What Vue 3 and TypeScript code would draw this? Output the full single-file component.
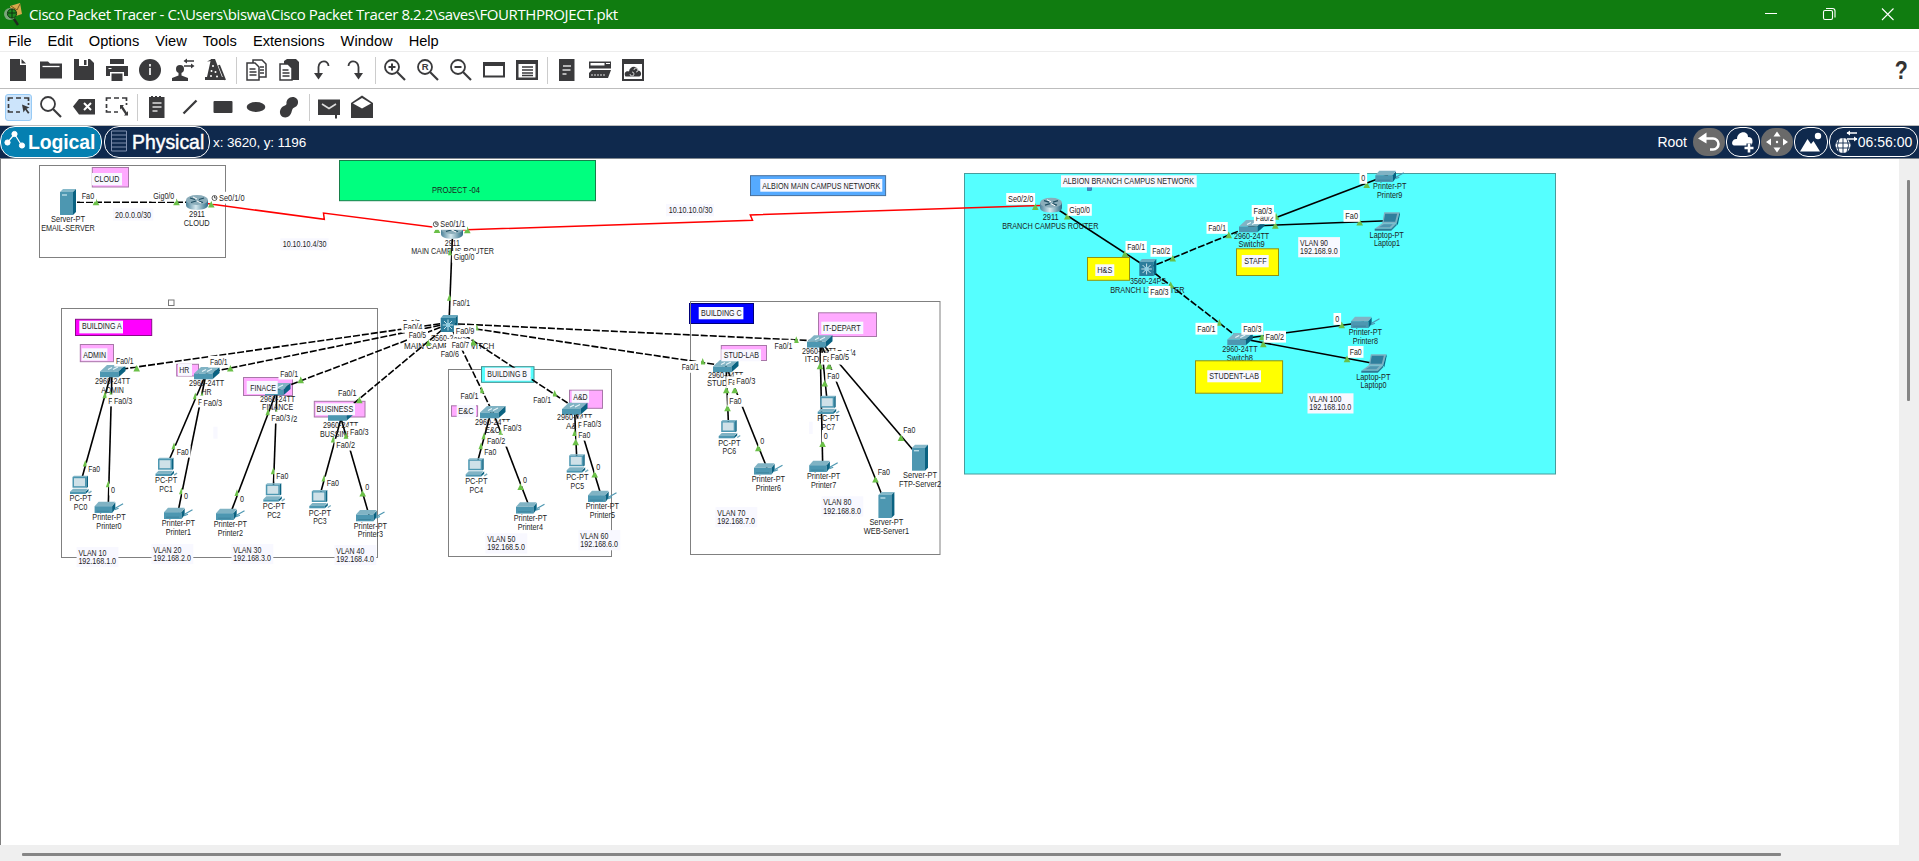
<script setup lang="ts">
type Point = [number, number]
type DeviceKind = 'server' | 'router' | 'l3' | 'switch' | 'pc' | 'printer' | 'laptop'

interface Device { kind: DeviceKind; x: number; y: number; lines: [string, number, number, number][] }
interface Area { x: number; y: number; w: number; h: number; fill: string; stroke: string }
interface Note { x: number; y: number; w: number; h: number; tx: number; lines: [string, number, number][]; bg?: string }
interface Port { text: string; x: number; y: number; w: number; left?: number; right?: number; clock?: boolean }

const menus = ['File', 'Edit', 'Options', 'View', 'Tools', 'Extensions', 'Window', 'Help']

const fileTools: string[][] = [
  ['new', 'open', 'save', 'print', 'info', 'user', 'wizard'],
  ['copy', 'paste', 'undo', 'redo'],
  ['zoomin', 'zoomreset', 'zoomout', 'window', 'list'],
  ['palette', 'devices', 'cloudwin'],
]
const drawTools: string[][] = [
  ['select', 'search', 'delete', 'resize'],
  ['note', 'line', 'rect', 'ellipse', 'blob'],
  ['mail', 'mailopen'],
]

const area = (x: number, y: number, x2: number, y2: number, fill: string, stroke = '#808080'): Area =>
  ({ x, y, w: x2 - x, h: y2 - y, fill, stroke })

const pink = '#ffaaff'
const pinkEdge = '#a877a8'
const areas: Area[] = [
  area(39.5, 165.5, 225.5, 257.5, 'none'),
  area(61.5, 308.5, 377.5, 557.5, 'none'),
  area(448.5, 369.5, 611.5, 556.5, 'none'),
  area(689.5, 303.5, 753.5, 323.5, '#0000ff', '#00007a'),
  area(690.5, 301.5, 940, 554.5, 'none'),
  area(964.5, 173.5, 1555.5, 474, '#55ffff', '#489c9c'),
  area(339.5, 160.5, 595.5, 200.7, '#00ff7f', '#177f4a'),
  area(92.3, 167.5, 128.5, 187, pink, pinkEdge),
  area(75.5, 319.3, 151.7, 335.5, '#ff00ff', '#8a0a8a'),
  area(80.3, 344.5, 113.5, 361.7, pink, pinkEdge),
  area(176.7, 364.3, 198.5, 376, pink, pinkEdge),
  area(243.5, 377.5, 292.5, 395.5, pink, pinkEdge),
  area(314.3, 401.3, 365, 417, pink, pinkEdge),
  area(481.5, 366.7, 534, 382.3, '#55ffff', '#3d8f8f'),
  area(451.5, 405.8, 477.6, 416.3, pink, pinkEdge),
  area(569.5, 390.2, 602.5, 408.3, pink, pinkEdge),
  area(750.5, 175.7, 885.6, 195.6, '#55aaff', '#456f9d'),
  area(818.5, 312.8, 876.5, 336.5, pink, pinkEdge),
  area(721.3, 345.5, 766.5, 360.5, pink, pinkEdge),
]
const yellowAreas: Area[] = [
  area(1087.5, 257.5, 1129.5, 280.3, '#ffff00', '#8f9412'),
  area(1236.5, 248.8, 1278.5, 275.5, '#ffff00', '#8f9412'),
  area(1195.5, 360.8, 1282.6, 393.2, '#ffff00', '#8f9412'),
]

const vlan = (n: number, subnet: string, x: number, y: number, y2: number): Note => ({
  x: x - 1.8, y: y - 8.7, w: n === 100 ? 46 : 41.8, h: 20.2, tx: x,
  lines: [[`VLAN ${n}`, y, n === 100 ? 32 : 28], [subnet, y2, n === 100 ? 42 : 37.7]],
})

const notes: Note[] = [
  { x: 92, y: 173, w: 30, h: 12.3, tx: 94.3, lines: [['CLOUD', 181.8, 25]] },
  { x: 113, y: 208.3, w: 40.3, h: 12.3, tx: 115, lines: [['20.0.0.0/30', 217.8, 36]] },
  { x: 280.3, y: 238.3, w: 48.3, h: 12, tx: 282.7, lines: [['10.10.10.4/30', 247, 43.7]] },
  { x: 431, y: 184, w: 0, h: 0, tx: 432, lines: [['PROJECT -04', 192.6, 48]] },
  { x: 79.3, y: 320.7, w: 43.7, h: 12.7, tx: 82, lines: [['BUILDING A', 329, 39.7]] },
  { x: 81.7, y: 348.3, w: 25.7, h: 12.3, tx: 83.3, lines: [['ADMIN', 357.7, 22.7]] },
  { x: 178, y: 363.7, w: 14, h: 12.2, tx: 179.3, lines: [['HR', 372.7, 10]] },
  { x: 246.7, y: 381, w: 31, h: 13, tx: 250.3, lines: [['FINACE', 390.7, 25.7]] },
  { x: 315.7, y: 403.3, w: 39.3, h: 11.9, tx: 316.6, lines: [['BUSINESS', 412, 36.7]] },
  { x: 485, y: 367.7, w: 45.7, h: 13, tx: 487.3, lines: [['BUILDING B', 376.8, 39.7]] },
  { x: 456.7, y: 405, w: 19.3, h: 12.3, tx: 458.3, lines: [['E&C', 414, 15.3]] },
  { x: 571.7, y: 390.7, w: 17.3, h: 12, tx: 573.3, lines: [['A&D', 400, 14.3]] },
  { x: 760.3, y: 179, w: 122, h: 12.7, tx: 762.3, lines: [['ALBION MAIN CAMPUS NETWORK', 189, 118]] },
  { x: 666, y: 204, w: 48, h: 12.3, tx: 668.7, lines: [['10.10.10.0/30', 212.8, 43.7]] },
  { x: 698.7, y: 307, w: 44.7, h: 12.3, tx: 701, lines: [['BUILDING C', 316, 40.7]] },
  { x: 821.3, y: 321.7, w: 42, h: 12.3, tx: 823, lines: [['IT-DEPART', 331, 37.7]] },
  { x: 721.3, y: 349.3, w: 39.7, h: 12, tx: 723.7, lines: [['STUD-LAB', 358, 35.3]] },
  { x: 1061, y: 175.3, w: 135.7, h: 12, tx: 1063, lines: [['ALBION BRANCH CAMPUS NETWORK', 184, 131]] },
  { x: 1095.3, y: 264.3, w: 19, h: 11.7, tx: 1097.3, lines: [['H&S', 272.8, 15]] },
  { x: 1241.7, y: 255, w: 27, h: 12.3, tx: 1244.3, lines: [['STAFF', 264, 22.3]] },
  { x: 1207.3, y: 370.3, w: 53.7, h: 12, tx: 1209.3, lines: [['STUDENT-LAB', 378.8, 49.7]] },
  { x: 213.3, y: 426.7, w: 4.3, h: 12, tx: 0, lines: [] },
  { x: 809, y: 421.7, w: 3.7, h: 12.3, tx: 0, lines: [] },
  vlan(10, '192.168.1.0', 78.4, 555.7, 564),
  vlan(20, '192.168.2.0', 153.3, 552.7, 561),
  vlan(30, '192.168.3.0', 233.3, 552.7, 560.6),
  vlan(40, '192.168.4.0', 336.3, 553.7, 562),
  vlan(50, '192.168.5.0', 487.3, 542, 550),
  vlan(60, '192.168.6.0', 580.3, 538.8, 547),
  vlan(70, '192.168.7.0', 717.3, 515.8, 523.8),
  vlan(80, '192.168.8.0', 823.3, 505, 513.8),
  vlan(90, '192.168.9.0', 1300, 245.8, 254),
  vlan(100, '192.168.10.0', 1309.3, 402, 410),
]

// Icon top-left corner, then label lines: text, centre x, baseline, width.
const pc = (name: string, x: number, y: number, dx = 10.6): Device => ({
  kind: 'pc', x, y, lines: [['PC-PT', x + dx, y + 25.5, 22.3], [name, x + dx, y + 34.4, 13.5]],
})
const printer = (name: string, x: number, y: number): Device => ({
  kind: 'printer', x, y, lines: [['Printer-PT', x + 14.4, y + 18.5, 33.3], [name, x + 14.4, y + 27.3, 25.3]],
})
const laptop = (name: string, x: number, y: number): Device => ({
  kind: 'laptop', x, y, lines: [['Laptop-PT', x + 12, y + 25.3, 34.3], [name, x + 12.3, y + 33.6, 26]],
})
const server = (name: string, x: number, y: number, w: number): Device => ({
  kind: 'server', x, y, lines: [['Server-PT', x + 8, y + 33.2, 34], [name, x + 8, y + 42, w]],
})
const sw = (name: string, x: number, y: number, w: number, b1: number, b2: number): Device => ({
  kind: 'switch', x, y, lines: [['2960-24TT', x + 12.6, b1, 35.3], [name, x + 12.6, b2, w]],
})

const devices: Device[] = [
  server('EMAIL-SERVER', 60, 189, 53.7),
  { kind: 'router', x: 186, y: 195, lines: [['2911', 197, 217, 16], ['CLOUD', 196.7, 226, 26]] },
  { kind: 'router', x: 441, y: 224, lines: [['2911', 452.3, 246.3, 15], ['MAIN CAMPUS ROUTER', 452.5, 254, 82.7]] },
  { kind: 'l3', x: 440.7, y: 315, lines: [['3560-24PS', 449, 340.7, 36], ['MAIN CAMPUS SWITCH', 449.2, 348.8, 90.3]] },
  sw('ADMIN', 100, 365, 22.7, 384, 392.8),
  sw('HR', 194, 367, 10, 385.8, 394.8),
  sw('FINANCE', 265, 383, 31, 401.8, 409.8),
  sw('BUSSINESS', 328, 408.5, 41, 427.8, 436.8),
  sw('E&C', 480, 406, 15.3, 424.6, 432.6),
  sw('A&D', 562, 402.5, 17, 419.6, 428.5),
  sw('STUD-LAB', 713, 360, 37.4, 378, 386),
  sw('IT-DEPT', 807, 335.3, 29.5, 354, 361.8),
  pc('PC0', 70, 475.7),
  pc('PC1', 155.5, 457.7),
  pc('PC2', 263.3, 483.3),
  pc('PC3', 309.3, 490),
  pc('PC4', 465.7, 458.3),
  pc('PC5', 566.7, 454.3),
  pc('PC6', 718.7, 420),
  pc('PC7', 817.7, 395.7),
  printer('Printer0', 94.6, 501.7),
  printer('Printer1', 164, 507.7),
  printer('Printer2', 216, 508.7),
  printer('Printer3', 356, 510),
  printer('Printer4', 516, 502.3),
  printer('Printer5', 588, 490.7),
  printer('Printer6', 754, 463.3),
  printer('Printer7', 809.2, 460.7),
  server('FTP-Server2', 912, 444.7, 42),
  server('WEB-Server1', 878.4, 492, 45.3),
  { kind: 'router', x: 1040, y: 197.7, lines: [['2911', 1050.7, 219.8, 16], ['BRANCH CAMPUS ROUTER', 1050.3, 229, 96.3]] },
  { kind: 'l3', x: 1139.3, y: 259, lines: [['3560-24PS', 1148, 284, 36], ['BRANCH L3 ROUTER', 1147.3, 293, 74.3]] },
  sw('Switch9', 1239, 220, 26.3, 238.8, 247),
  sw('Switch8', 1227.3, 333, 26.3, 352, 360.8),
  printer('Printer9', 1375.3, 170.7),
  printer('Printer8', 1351, 316.7),
  laptop('Laptop1', 1374.7, 212.3),
  laptop('Laptop0', 1361.3, 354.3),
]

const solid: [Point, Point][] = [
  [[452.5, 235], [449, 323]],
  [[111.5, 372], [80, 485]], [[112, 372], [108.3, 505]],
  [[206, 374], [167, 465]], [[206, 374], [178, 512]],
  [[277, 390], [231, 512]], [[277, 390], [273.3, 490]],
  [[342, 415], [320, 495]], [[340, 415], [369, 515]],
  [[491, 412], [478, 460]], [[493, 412], [529, 506]],
  [[574.5, 408], [576.8, 460]], [[574.5, 408], [601, 495]],
  [[726, 366], [728.5, 425]], [[726, 366], [767, 468]],
  [[820, 341], [822.7, 465]], [[821, 341], [827, 400]], [[820, 341], [886, 505]], [[820, 341], [919, 457]],
  [[1051, 205], [1148, 268]],
  [[1251, 227], [1388, 175]], [[1251, 226], [1388, 220.8]],
  [[1240, 339], [1364, 322.3]], [[1240, 338.3], [1373, 363.3]],
]
const dashed: [Point, Point][] = [
  [[68, 202.3], [196, 202.3]],
  [[449, 322.5], [112, 370.5]], [[449, 323.5], [206, 373]], [[449, 324], [277, 390]], [[449, 324], [340, 415]],
  [[449, 323], [492.5, 412]], [[449, 325], [574.5, 407.5]], [[449, 325], [726, 366]], [[449, 323.5], [819.5, 341]],
  [[1148, 268], [1251, 226]], [[1148, 268], [1240, 339]],
]
const serial: string[] = [
  '205,203.3 324.3,219.3 323.5,213 452,229.5',
  '452,230.3 752.5,220.3 750.3,215 1050,205.2',
]

const beacons: [number, number, number?][] = [
  [96, 202], [176.5, 202], [211.3, 204.3], [437, 229.8], [467.3, 230], [450, 252, 4], [449.5, 297.5, 5],
  [476.7, 327.2, 4], [428.3, 342.7, 5], [473.3, 342.2],
  [136.7, 368.3], [230.3, 368.3], [300.7, 380], [359.3, 400],
  [105, 395, 5], [110.7, 394, 4], [85.3, 463.3, 5], [108.3, 484, 5],
  [195.3, 396, 5], [202, 395, 4], [174, 446, 5], [181.5, 491, 5],
  [268, 412, 5], [276.5, 412, 4], [237, 492.7, 5], [273.3, 471, 5],
  [333.3, 439.3, 5], [346, 436, 5], [324, 478.3, 5], [362.7, 493.3],
  [481.7, 390, 5], [554.7, 393.3, 5], [484, 436, 5], [481, 446, 5], [500.7, 432.5, 5], [520.7, 486.7],
  [574.7, 432.7, 5], [575.7, 442], [594.7, 474.3],
  [702.7, 361.3, 5], [796.3, 339.7, 5], [726.3, 390], [727.5, 408], [734.7, 390], [758.3, 448],
  [820, 366], [829, 366], [824.7, 383.3], [822.6, 443.7], [901, 437.7], [875.5, 479.3],
  [1035.3, 206.7], [1067.3, 216.3], [1125, 253.7], [1172.7, 258.3], [1170.7, 285], [1228.7, 235],
  [1275.3, 225.5], [1276, 216.5], [1366.7, 184.7], [1359.7, 222.3], [1219.3, 322.5, 5], [1262, 337],
  [1263.3, 344], [1341.7, 325], [1347, 359],
]

const ports: Port[] = [
  { text: 'Fa0', x: 81.7, y: 198.8, w: 12.5 },
  { text: 'Gig0/0', x: 153.3, y: 198.8, w: 21 },
  { text: 'Se0/1/0', x: 219, y: 200.8, w: 25.5, left: 7, clock: true },
  { text: 'Se0/1/1', x: 440.3, y: 227, w: 25, left: 8, clock: true },
  { text: 'Gig0/0', x: 453.7, y: 260, w: 20.7 },
  { text: 'Fa0/1', x: 452.7, y: 306, w: 17.3 },
  { text: 'Fa0/3', x: 402.7, y: 326, w: 17.5 },
  { text: 'Fa0/4', x: 403.3, y: 330, w: 19 },
  { text: 'Fa0/5', x: 408.7, y: 338, w: 17.5 },
  { text: 'Fa0/9', x: 455.7, y: 334.3, w: 18.7 },
  { text: 'Fa0/6', x: 440.7, y: 357, w: 18.3 },
  { text: 'Fa0/7', x: 451.7, y: 347.8, w: 17.5, left: 5.5 },
  { text: 'Fa0/1', x: 116, y: 363.8, w: 17.7 },
  { text: 'Fa0/2', x: 108.3, y: 403.6, w: 18 },
  { text: 'Fa0/3', x: 114, y: 404.3, w: 18.3 },
  { text: 'Fa0', x: 88.3, y: 471.8, w: 11.7 },
  { text: '0', x: 111, y: 492.7, w: 4 },
  { text: 'Fa0/1', x: 210, y: 364.8, w: 17.7 },
  { text: 'Fa0/2', x: 198, y: 404.6, w: 18 },
  { text: 'Fa0/3', x: 203.5, y: 405.5, w: 18.7 },
  { text: 'Fa0', x: 176.7, y: 454.8, w: 12 },
  { text: '0', x: 184, y: 498.6, w: 4 },
  { text: 'Fa0/1', x: 280.3, y: 376.7, w: 17.7 },
  { text: 'Fa0/2', x: 278.7, y: 421.6, w: 18.7 },
  { text: 'Fa0/3', x: 271.3, y: 420.7, w: 18.7, right: 1 },
  { text: 'Fa0', x: 276.3, y: 478.8, w: 12 },
  { text: '0', x: 240, y: 501.8, w: 4 },
  { text: 'Fa0/1', x: 338, y: 395.8, w: 18.7 },
  { text: 'Fa0/3', x: 350, y: 434.8, w: 18.7 },
  { text: 'Fa0/2', x: 336.3, y: 447.8, w: 18.7 },
  { text: 'Fa0', x: 326.7, y: 485.7, w: 12.3 },
  { text: '0', x: 365.3, y: 489.8, w: 4 },
  { text: 'Fa0/1', x: 460.5, y: 399, w: 18 },
  { text: 'Fa0/3', x: 503.3, y: 430.8, w: 18.3 },
  { text: 'Fa0/2', x: 487, y: 443.8, w: 18.3 },
  { text: 'Fa0', x: 484.3, y: 455, w: 12 },
  { text: '0', x: 523, y: 483, w: 4 },
  { text: 'Fa0/1', x: 533.3, y: 403, w: 17.7 },
  { text: 'Fa0/2', x: 578, y: 427.6, w: 18 },
  { text: 'Fa0/3', x: 583.3, y: 426.8, w: 18 },
  { text: 'Fa0', x: 578.3, y: 437.8, w: 12 },
  { text: '0', x: 596.3, y: 469.8, w: 4 },
  { text: 'Fa0/1', x: 681.7, y: 370, w: 17.5 },
  { text: 'Fa0/2', x: 728, y: 385.3, w: 18 },
  { text: 'Fa0/3', x: 736.3, y: 383.8, w: 19 },
  { text: 'Fa0', x: 729.3, y: 404, w: 12.3 },
  { text: '0', x: 760.3, y: 444, w: 4 },
  { text: 'Fa0/1', x: 774.5, y: 348.8, w: 18 },
  { text: 'Fa0/4', x: 837.3, y: 356.3, w: 18.5 },
  { text: 'Fa0/2', x: 822.7, y: 361.8, w: 18 },
  { text: 'Fa0/5', x: 830.5, y: 360, w: 18.7 },
  { text: 'Fa0', x: 827.3, y: 378.8, w: 12 },
  { text: '0', x: 823.7, y: 439, w: 4 },
  { text: 'Fa0', x: 903.3, y: 433, w: 12 },
  { text: 'Fa0', x: 877.7, y: 475, w: 12.3 },
  { text: 'Se0/2/0', x: 1008, y: 202, w: 25.3 },
  { text: 'Gig0/0', x: 1069.3, y: 213, w: 20.7 },
  { text: 'Fa0/1', x: 1127.3, y: 250, w: 17.7 },
  { text: 'Fa0/2', x: 1152.3, y: 254, w: 18 },
  { text: 'Fa0/3', x: 1150.3, y: 295, w: 18.3 },
  { text: 'Fa0/1', x: 1208.3, y: 231, w: 17.7 },
  { text: 'Fa0/2', x: 1255.7, y: 221.3, w: 18 },
  { text: 'Fa0/3', x: 1253.5, y: 214, w: 18.7 },
  { text: '0', x: 1361.3, y: 181, w: 4 },
  { text: 'Fa0', x: 1345.3, y: 219, w: 12.7 },
  { text: 'Fa0/1', x: 1197.3, y: 331.8, w: 18.3 },
  { text: 'Fa0/3', x: 1243.2, y: 332, w: 18.2 },
  { text: 'Fa0/2', x: 1265.5, y: 339.8, w: 18.7 },
  { text: '0', x: 1335.3, y: 322, w: 4 },
  { text: 'Fa0', x: 1349.7, y: 355, w: 12 },
]

const beaconPath = ([x, y, w = 6.6]: [number, number, number?]) =>
  `${x - w / 2},${y + 3.2} ${x + w / 2},${y + 3.2} ${x},${y - 3.4}`
</script>

<template>
  <div class="app">
    <header class="titlebar">
      <svg class="logo" width="22" height="26" viewBox="0 0 22 26">
        <path d="M8 4 18 1l2 11-9 3z" fill="#d9a94c" /><path d="M9 4l6 4 3-6" fill="none" stroke="#7a5a1c" />
        <circle cx="8" cy="12" r="6" fill="#8fae8f" opacity=".85" />
        <circle cx="10" cy="11.5" r="4.6" fill="#1f8a1f" stroke="#123812" /><path d="M10 7v9M6 11h8" stroke="#103010" />
        <path d="M12 17l4 6" stroke="#202820" stroke-width="2.4" />
      </svg>
      <span class="title">Cisco Packet Tracer - C:\Users\biswa\Cisco Packet Tracer 8.2.2\saves\FOURTHPROJECT.pkt</span>
      <svg class="winctl" width="150" height="29" viewBox="0 0 150 29" fill="none" stroke="#fff" stroke-width="1.1">
        <path d="M12 13.5h12M129 8.500l11.500 11.500M140.500 8.500l-11.500 11.500" />
        <rect x="70.500" y="10.500" width="9" height="9" rx="1.500" /><path d="M73 8.500h6.500a2.500 2.500 0 0 1 2.500 2.500v6.500" />
      </svg>
    </header>
    <nav class="menubar"><span v-for="m in menus" :key="m">{{ m }}</span></nav>

    <div v-for="(groups, row) in [fileTools, drawTools]" :key="row" class="toolbar">
      <div v-for="(group, gi) in groups" :key="gi" class="group">
        <span v-for="t in group" :key="t" class="tool" :class="{ active: t === 'select' }">
          <svg width="24" height="24" viewBox="0 0 24 24" fill="#3a3a3c" stroke="none">
            <template v-if="t === 'new'"><path d="M4 1h10v6h6v16H4z" /><path d="M15.500 1 20 5.500h-4.500z" /></template>
            <template v-else-if="t === 'open'"><path d="M1 3.500h8l2 2h12v15H1z" /><path d="M3.500 8.500h17" stroke="#fff" stroke-width="1.300" /></template>
            <template v-else-if="t === 'save'"><path d="M2 1h16l4 4v17H2z" /><path d="M7 1h9v7H7z" fill="#fff" /><path d="M12 2h2.500v5H12z" /></template>
            <template v-else-if="t === 'print'"><path d="M5 1h14v5H5zM1 8h22v10h-4v-4H5v4H1z" /><path d="M6.500 15.500h11V23h-11z" /><path d="M3.500 10.500h3" stroke="#fff" /></template>
            <template v-else-if="t === 'info'"><circle cx="12" cy="12" r="11" /><path d="M12 6v2.500M12 10v7" stroke="#ddd" stroke-width="2" /></template>
            <template v-else-if="t === 'user'"><circle cx="9" cy="11" r="4" /><path d="M7.500 14h3v3.500l6.500 2.500v3H1v-3l6.500-2.500z" /><path d="M14 3h9M13 8h9" stroke="#3a3a3c" stroke-width="1.500" /><path d="M16 .5 12.500 3 16 5.500zM20 5.500 23.500 8 20 10.500z" /></template>
            <template v-else-if="t === 'wizard'"><path d="M7 1h4l7 18h2v3H1v-3h2z" /><path d="M15 7l6 15" stroke="#3a3a3c" stroke-width="2" /><path d="M3 3.500 8 1v2z" /><g fill="#fff"><circle cx="9" cy="8" r="1" /><circle cx="7.500" cy="13" r="1" /><circle cx="11.500" cy="14" r="1" /><circle cx="7" cy="18" r="1" /><circle cx="13" cy="18.500" r="1" /></g></template>
            <template v-else-if="t === 'copy'"><path d="M9 2h9l4 4v13H9z" fill="#fff" stroke="#3a3a3c" stroke-width="1.500" /><path d="M3 5h8l4 4v13H3z" fill="#fff" stroke="#3a3a3c" stroke-width="1.500" /><path d="M5.500 11h6M5.500 14h7M5.500 17h7M16 9h4M16 12h4M16 15h4" stroke="#3a3a3c" stroke-width="1.300" /></template>
            <template v-else-if="t === 'paste'"><path d="M7 3l3-2h9l3 3v18H7z" /><path d="M3 6h8l4 4v12H3z" fill="#fff" stroke="#3a3a3c" stroke-width="1.500" /><path d="M5.500 12h6M5.500 15h7M5.500 18h7" stroke="#3a3a3c" stroke-width="1.300" /></template>
            <template v-else-if="t === 'undo'"><path d="M18.500 8c0-6-9-6.500-10 1v8" fill="none" stroke="#3a3a3c" stroke-width="1.800" /><path d="M4 15h9l-4.500 6.500z" /></template>
            <template v-else-if="t === 'redo'"><path d="M5.500 8c0-6 9-6.500 10 1v8" fill="none" stroke="#3a3a3c" stroke-width="1.800" /><path d="M11 15h9l-4.500 6.500z" /></template>
            <template v-else-if="t.startsWith('zoom') || t === 'search'">
              <circle cx="9" cy="9" r="7" fill="none" stroke="#3a3a3c" stroke-width="1.800" /><path d="M14 14l8 8" stroke="#3a3a3c" stroke-width="2.200" />
              <path v-if="t === 'zoomin'" d="M5.500 9h7M9 5.500v7" stroke="#3a3a3c" stroke-width="2" />
              <path v-if="t === 'zoomout'" d="M5.500 9h7" stroke="#3a3a3c" stroke-width="2" />
              <text v-if="t === 'zoomreset'" x="5.800" y="12.400" class="glyph">R</text>
            </template>
            <template v-else-if="t === 'window'"><path d="M1 4h22v15.500H1z" /><path d="M3 8h18v9.500H3z" fill="#fff" /></template>
            <template v-else-if="t === 'list'"><path d="M1 2h22v20H1z" /><path d="M3.500 6h17v13.500h-17z" fill="#fff" /><path d="M7 9h11M7 12h11M7 15h11M7 17.500h11" stroke="#3a3a3c" stroke-width="1.400" /></template>
            <template v-else-if="t === 'palette'"><path d="M4 1h15.500v22H4z" /><path d="M8 8h8M7.500 12h8M7.500 16h4" stroke="#ddd" stroke-width="1.400" /></template>
            <template v-else-if="t === 'devices'"><path d="M1 3.500h22v7H1z" /><path d="M2.500 5h14v2.500h-14zM18 5h4v1h-4z" fill="#fff" /><path d="M4 12h19l-3 8H1v-5z" /><path d="M3 17h15" stroke="#aaa" stroke-dasharray="2 1" stroke-width="1.500" /></template>
            <template v-else-if="t === 'cloudwin'"><path d="M1 1h22v22H1z" /><path d="M3 6h18v15H3z" fill="#fff" /><path d="M4.500 18.500c-2-3 0-6 3.500-5 1-6 8-6 9-1 4 0 4 6 1 6z" /><path d="M9 16a2 2 0 1 0 2-2M13 12a2 2 0 1 1 2 2" fill="none" stroke="#ccc" /></template>
            <template v-else-if="t === 'select' || t === 'resize'">
              <path d="M1.500 6V3H6M9 3h5M17 3h4.500v3M1.500 9v4M1.500 15v2H6M9 17h4M21.500 8v2" fill="none" stroke="#3a3a3c" stroke-width="1.700" />
              <path v-if="t === 'select'" d="M15 9.500l7.500 3-3 1.300 3 4-1.500 1-2.800-4-1.700 2.700z" />
              <path v-else d="M15 10h4l-1.200 1.200 4 6.200L23 16v4.500h-4l1.200-1.200-4-6L15 14.500z" />
            </template>
            <template v-else-if="t === 'delete'"><path d="M1 11.500 7 4h16v15.500H7z" /><path d="M12 8l7 7M19 8l-7 7" stroke="#fff" stroke-width="2" /></template>
            <template v-else-if="t === 'note'"><path d="M4 2h2V1h2v1h2V1h2v1h2V1h2v1h3.500v21H4z" /><path d="M7.500 8h9M7.500 12h9M7.500 16h5" stroke="#ddd" stroke-width="1.400" /></template>
            <template v-else-if="t === 'line'"><path d="M5.500 18.500 18.500 5.500" stroke="#3a3a3c" stroke-width="2.300" /></template>
            <template v-else-if="t === 'rect'"><rect x="2.500" y="6" width="19" height="12" rx="1" /></template>
            <template v-else-if="t === 'ellipse'"><ellipse cx="12" cy="12" rx="9.300" ry="5" /></template>
            <template v-else-if="t === 'blob'"><path d="M9.500 9C9 5 12 2 15.500 2s6 2.500 5.500 6c-.5 4-4 4-5.500 6-1 2-1 8-7 8.500-5 0-7-5-4.500-9 2-3 4.500-2.500 5.500-4.500z" /></template>
            <template v-else-if="t === 'mail'"><path d="M1 4.500h22V20h-3v3.500h-2V20H1z" /><path d="M5 9l7 4.500L19 9" fill="none" stroke="#ddd" stroke-width="1.600" /></template>
            <template v-else-if="t === 'mailopen'"><path d="M1 8 12 .5 23 8v15H1z" /><path d="M3 8.500 12 3l9 5.500-9 5z" fill="#fff" /></template>
          </svg>
        </span>
      </div>
      <span v-if="row === 0" class="help">?</span>
    </div>

    <div class="viewbar">
      <div class="pill logical">
        <svg width="22" height="22" viewBox="0 0 22 22" fill="#fff" stroke="#fff"><path d="M3.500 12.500 10.500 4l7.500 12" fill="none" stroke-width="1.200" /><circle cx="10.500" cy="4" r="2.600" /><circle cx="3.500" cy="12.500" r="2.600" /><circle cx="18" cy="15.500" r="2.600" /></svg>
        <b>Logical</b>
      </div>
      <div class="pill physical">
        <svg width="16" height="22" viewBox="0 0 16 22" fill="none" stroke="#7f8fae"><path d="M.5 1h15v20H.5zM.5 5h15M.5 9h15M.5 13h15M.5 17h15" /></svg>
        <span>Physical</span>
      </div>
      <span class="coords">x: 3620, y: 1196</span>
      <div class="right">
        <span class="root">Root</span>
        <div class="btn gray"><svg width="26" height="22" viewBox="0 0 26 22"><path d="M9 7.500h8a5 5 0 0 1 0 11h-3" fill="none" stroke="#fff" stroke-width="2.600" /><path d="M2 7.500 10.500 1.500v11z" fill="#fff" /></svg></div>
        <div class="btn line"><svg width="26" height="24" viewBox="0 0 26 24" fill="#fff"><path d="M4 15.500C0 14 3 8 7 9 7 1 18 0 18 7c6 0 5 7 3 8.500z" /><path d="M19 13.500v10M14 18.500h10" stroke="#0f294d" stroke-width="5" /><path d="M19 13.500v9M14.500 18h9" stroke="#fff" stroke-width="2.600" /></svg></div>
        <div class="btn gray"><svg width="26" height="26" viewBox="0 0 26 26" fill="#fff"><path d="M13 2.500l3.500 5h-7zM13 23.500l3.500-5h-7zM2 13l5-3.500v7zM24 13l-5-3.500v7z" /><circle cx="13" cy="13" r="1.200" /></svg></div>
        <div class="btn line"><svg width="26" height="22" viewBox="0 0 26 22" fill="#fff"><path d="M2 20.500 9.500 8l3.500 5 2.500-3L22 20.500z" /><circle cx="20" cy="5" r="3.200" /></svg></div>
        <div class="btn time">
          <svg width="24" height="26" viewBox="0 0 24 26"><circle cx="9" cy="16.500" r="7.500" fill="#fff" /><path d="M9 9v15M1.500 14h15M1.500 19h15M5 10q-3 6.500 0 13M13 10q3 6.500 0 13" fill="none" stroke="#0f294d" stroke-width=".9" /><path d="M13 4h10M13 10h10" stroke="#fff" stroke-width="1.600" /><path d="M16 1.500 12.500 4 16 6.500zM20 7.500 23.500 10 20 12.500z" fill="#fff" /></svg>
          <span>06:56:00</span>
        </div>
      </div>
    </div>

    <main class="workspace">
      <svg class="canvas" width="1899" height="686" viewBox="0 159 1899 686">
        <defs>
          <linearGradient id="metal" x1="0" x2="1"><stop offset="0" stop-color="#4b8199" /><stop offset=".45" stop-color="#d5e8ee" /><stop offset="1" stop-color="#2d6c86" /></linearGradient>
          <g id="server"><path d="M0 3 3 0h13l-3 3z" fill="#86b9ca" /><path d="M0 3h13v23H0z" fill="#4d97b1" /><path d="M13 3l3-3v23l-3 3z" fill="#0a6281" /><path d="M2 6h5" stroke="#b9dce7" stroke-width="1.400" /></g>
          <g id="router"><path d="M0 5v5c0 6.500 22 6.500 22 0V5z" fill="url(#metal)" /><ellipse cx="11" cy="5" rx="11" ry="5" fill="#8badba" /><path d="M4 3l5 1.500M18 3l-5 1.500M5 7.500l5-1.500M17 7.500 12.500 6" stroke="#204f63" stroke-width="1.300" /><path d="M7 2l4 2M15 8l-4-2" stroke="#fff" /></g>
          <g id="l3"><path d="M0 3 2.500 0H17l-2.500 3z" fill="#69a9bf" /><path d="M14.500 3 17 0v14l-2.500 3z" fill="#075f7e" /><path d="M0 3h14.500v14H0z" fill="#2c7d9c" /><path d="M7.300 4.500v11M2 10h10.600M3.300 6l8 8M11.300 6l-8 8" stroke="#d9edf3" stroke-width=".9" /><circle cx="7.300" cy="10" r="2.200" fill="#8fcfe4" /></g>
          <g id="switch"><path d="M0 6.500 7 0h18.500l-7 6.500z" fill="#80b3c4" /><path d="M0 6.500h18.500v5.800H0z" fill="#4d97b1" /><path d="M18.500 6.500 25.500 0v6l-7 6.300z" fill="#0a6281" /><path d="M8 4.500l4-2M13 4.500l5-2.500" stroke="#e8f5f8" stroke-width="1.100" /></g>
          <g id="pc"><path d="M2.500 1.200 4 0h14l-1.500 1.200z" fill="#86b9ca" /><path d="M2.500 1.200h14v10.800h-14z" fill="#4d97b1" /><path d="M16.500 1.200 18 0v11.200l-1.500 1z" fill="#0a6281" /><path d="M4 2.500h11v8H4z" fill="#cfe1e8" /><path d="M0 16l3-3h14.500l-2 3z" fill="#80b3c4" /><path d="M0 16h15.500v2.300H0z" fill="#4d97b1" /><path d="M15.500 16l3-3v2.500l-3 2.800z" fill="#0a6281" /><path d="M18.500 17.500l3-2" stroke="#78aec1" stroke-width="1.500" /></g>
          <g id="printer"><path d="M0 4.500 4 0h16.500l-3 4.500z" fill="#80b3c4" /><path d="M0 4.500h17.500v6.800H0z" fill="#4d97b1" /><path d="M17.500 4.500l3.200-4V7l-3.200 4.300z" fill="#0a6281" /><path d="M20.500 6.500l8-4.500M20 8l4-1.500" stroke="#4d97b1" stroke-width="1.200" /><path d="M2 9.500h13" stroke="#3b8099" stroke-width=".8" /></g>
          <g id="laptop"><path d="M9.500 0h15.500l-3 11H7.500z" fill="#7db0c2" /><path d="M10.500 1.500h12L20.500 9.500H9z" fill="#2f7f9d" /><path d="M25 0l-3 11 1 2 2.300-11z" fill="#0a6281" /><path d="M0 16.500 7.500 11H22l-5.500 5.500z" fill="#80b3c4" /><path d="M4 15l5-3h9l-3 3z" fill="#4d97b1" /><path d="M0 16.500h16.500L22 11v2l-5.500 5.500H0z" fill="#2f7893" /></g>
        </defs>

        <rect v-for="(a, i) in areas" :key="'a' + i" :x="a.x" :y="a.y" :width="a.w" :height="a.h" :fill="a.fill" :stroke="a.stroke" />
        <rect x="168.500" y="300" width="5.500" height="5.500" fill="#fff" stroke="#777" />
        <rect x="1087.500" y="186.500" width="4" height="4" fill="#4a86c8" stroke="#2c5f9a" stroke-width=".6" />

        <polyline v-for="s in serial" :key="s" :points="s" fill="none" stroke="#ff0000" stroke-width="1.500" />
        <line v-for="([a, b], i) in solid" :key="'s' + i" :x1="a[0]" :y1="a[1]" :x2="b[0]" :y2="b[1]" class="wire" />
        <line v-for="([a, b], i) in dashed" :key="'d' + i" :x1="a[0]" :y1="a[1]" :x2="b[0]" :y2="b[1]" class="wire dash" />

        <use v-for="(d, i) in devices" :key="'i' + i" :href="'#' + d.kind" :x="d.x" :y="d.y" />
        <template v-for="(d, i) in devices" :key="'l' + i">
          <text v-for="[t, cx, y, w] in d.lines" :key="t" :x="cx - w / 2" :y="y" :textLength="w" lengthAdjust="spacingAndGlyphs">{{ t }}</text>
        </template>

        <rect v-for="(a, i) in yellowAreas" :key="'y' + i" :x="a.x" :y="a.y" :width="a.w" :height="a.h" :fill="a.fill" :stroke="a.stroke" />
        <g v-for="(n, i) in notes" :key="'n' + i">
          <rect :x="n.x" :y="n.y" :width="n.w" :height="n.h" fill="#f8f8ff" />
          <text v-for="[t, y, w] in n.lines" :key="t" :x="n.tx" :y="y" :textLength="w" lengthAdjust="spacingAndGlyphs">{{ t }}</text>
        </g>

        <polygon v-for="(b, i) in beacons" :key="'b' + i" :points="beaconPath(b)" fill="#6bc048" />
        <g v-for="(p, i) in ports" :key="'p' + i">
          <rect :x="p.x - (p.left ?? 1.8)" :y="p.y - 9" :width="p.w + (p.left ?? 1.8) + (p.right ?? 1.8)" height="11.800" fill="#fff" />
          <g v-if="p.clock" fill="none" stroke="#333" stroke-width=".8"><circle :cx="p.x - 4.5" :cy="p.y - 2.8" r="2.500" /><path :d="`M${p.x - 4.5} ${p.y - 4.8}v2h2`" /></g>
          <text :x="p.x" :y="p.y" :textLength="p.w" lengthAdjust="spacingAndGlyphs">{{ p.text }}</text>
        </g>
      </svg>
      <div class="vscroll"><i></i></div>
      <div class="hscroll"><i></i></div>
    </main>
  </div>
</template>

<style scoped>
.app { width: 1919px; height: 861px; display: flex; flex-direction: column; background: #fff; overflow: hidden; font-family: "Liberation Sans", Arial, sans-serif; color: #000; }
.titlebar { height: 29px; flex: none; background: #107c10; display: flex; align-items: center; color: #fff; }
.logo { margin-left: 2px; flex: none; }
.title { margin-left: 5px; font: 15px/29px "Open Sans", "Noto Sans", sans-serif; letter-spacing: -0.42px; white-space: nowrap; }
.winctl { margin-left: auto; margin-right: 16px; }
.menubar { height: 22px; flex: none; border-bottom: 1px solid #ededed; display: flex; padding-left: 8px; gap: 16px; font-size: 14.650px; line-height: 24px; }
.toolbar { height: 36px; flex: none; border-bottom: 1px solid #bdbdbd; display: flex; align-items: center; padding-left: 1.5px; }
.group { display: flex; align-items: center; }
.group + .group { margin-left: 3px; padding-left: 3px; border-left: 1px solid #ccc; }
.tool { width: 33px; height: 27px; display: flex; align-items: center; justify-content: center; }
.tool.active { position: relative; }
.tool.active::before { content: ""; position: absolute; inset: 0 2.5px 0 3.5px; background: #cce4fb; border: 1px solid #98cbf5; border-radius: 3px; box-sizing: border-box; }
.tool svg { position: relative; }
.tool.active svg { margin-left: 1px; }
.glyph { font: bold 9.500px "Liberation Sans", sans-serif; }
.help { margin-left: auto; margin-right: 11px; font-size: 26px; font-weight: bold; line-height: 36px; color: #333; transform: scaleX(.82); transform-origin: right; }
.viewbar { height: 32px; flex: none; background: #0f294d; border-bottom: 1px solid #808890; display: flex; align-items: center; color: #fff; }
.pill { height: 32px; box-sizing: border-box; border: 1px solid #fff; border-radius: 15px; display: flex; align-items: center; font-size: 19.400px; }
.logical { width: 102px; background: #0580b1; padding-left: 3px; }
.logical b { margin-left: 2px; letter-spacing: -0.1px; }
.logical svg { margin-top: -2px; }
.physical { width: 106px; margin-left: 2px; padding-left: 6px; }
.physical svg { margin-top: -2px; }
.physical span { margin-left: 5px; -webkit-text-stroke: .45px #fff; }
.coords { margin-left: 3px; font-size: 13.500px; letter-spacing: -0.12px; }
.right { margin-left: auto; display: flex; align-items: center; font-size: 14px; padding-right: 1px; }
.root { margin-right: 5px; }
.btn { height: 30px; width: 34px; box-sizing: border-box; border-radius: 14px; display: flex; align-items: center; justify-content: center; }
.btn.gray { height: 28px; width: 32px; background: #6a6a6a; margin: 0 1px; }
.btn.line, .btn.time { border: 1px solid #fff; }
.btn.time { width: 89px; margin-left: 1px; gap: 0; padding-right: 1px; }
.workspace { flex: 1; min-height: 0; display: grid; grid-template: 686px 16px / 1899px 20px; }
.canvas { display: block; box-sizing: border-box; background: #fff; box-shadow: inset 1px 0 #808080; }
.canvas text { font: 8.500px "Liberation Sans", Arial, sans-serif; fill: #1c1c1c; }
.wire { stroke: #000; stroke-width: 1.600; }
.dash { stroke-dasharray: 7 2; }
.vscroll { background: #efefef; display: flex; justify-content: center; padding-right: 1px; }
.vscroll i { width: 3px; height: 221px; margin-top: 21px; background: #858585; border-radius: 1px; }
.hscroll { grid-column: 1 / 3; background: #efefef; }
.hscroll i { display: block; width: 1759px; height: 3px; margin: 8px 0 0 22px; background: #858585; border-radius: 1px; }
</style>

<style>
body { overflow: hidden; }
</style>
